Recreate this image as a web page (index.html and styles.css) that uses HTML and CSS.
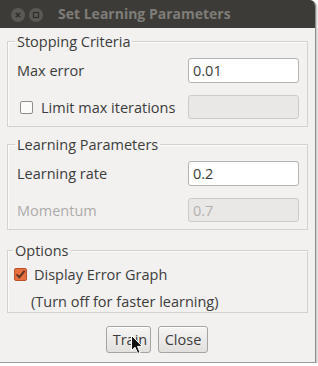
FILE: index.html
```html
<!DOCTYPE html>
<html>
<head>
<meta charset="utf-8">
<title>Set Learning Parameters</title>
<link rel="stylesheet" href="styles.css">
</head>
<body>
<div class="win">
  <div class="titlebar">
    <span class="wbtn">
      <svg width="14" height="14" viewBox="0 0 14 14"><circle cx="7" cy="7" r="7" fill="#5a5955"/><path d="M4.8 4.8 L9.2 9.2 M9.2 4.8 L4.8 9.2" stroke="#2f2e2b" stroke-width="1.4"/></svg>
    </span>
    <span class="wbtn">
      <svg width="14" height="14" viewBox="0 0 14 14"><circle cx="7" cy="7" r="7" fill="#5a5955"/><rect x="4.5" y="4.5" width="5" height="5" fill="none" stroke="#2f2e2b" stroke-width="1.2"/></svg>
    </span>
    <span class="wtitle">Set Learning Parameters</span>
  </div>

  <div class="body">
    <fieldset class="grp">
      <legend>Stopping Criteria</legend>
      <div class="row">
        <span class="lbl">Max error</span>
        <span class="field">0.01</span>
      </div>
      <div class="row row2">
        <span class="lbl check-lbl"><span class="cb"></span>Limit max iterations</span>
        <span class="field off"></span>
      </div>
    </fieldset>

    <fieldset class="grp">
      <legend>Learning Parameters</legend>
      <div class="row">
        <span class="lbl">Learning rate</span>
        <span class="field">0.2</span>
      </div>
      <div class="row row2">
        <span class="lbl dim">Momentum</span>
        <span class="field off">0.7</span>
      </div>
    </fieldset>

    <fieldset class="grp opts">
      <legend>Options</legend>
      <div class="optrow">
        <span class="cb on">
          <svg width="13" height="13" viewBox="0 0 13 13"><path d="M2.6 6.4 L5.3 9.3 L10.6 2.8" fill="none" stroke="#5b3524" stroke-width="2"/></svg>
        </span>
        <span>Display Error Graph</span>
      </div>
      <div class="note">(Turn off for faster learning)</div>
    </fieldset>

    <div class="buttons">
      <span class="btn train">Train</span>
      <span class="btn">Close</span>
      <svg class="cursor" width="13" height="20" viewBox="0 0 13 20"><path d="M0.5 0.5 L0.5 15.5 L4 12.2 L6.6 18.4 L9 17.4 L6.5 11.4 L11.3 11.4 Z" fill="#111" stroke="#fff" stroke-width="1"/></svg>
    </div>
  </div>
</div>
</body>
</html>
```

FILE: styles.css
```css
body {margin: 0; background: #ffffff; font-family: "Open Sans", "DejaVu Sans", sans-serif; font-size: 14.5px; color: #3c3c3c}
.win {width: 315px; height: 362px; background: #f2f1f0; border-right: 1px solid #8e8d8a; border-bottom: 1px solid #9a9996; border-top-right-radius: 6px; box-shadow: 1px 1px 0 #cfcfcf, 2px 2px 0 #e2e2e2; overflow: hidden}
.titlebar {height: 28px; background: #3c3b37; display: flex; align-items: center; padding-left: 11px}
.wbtn {display: flex; width: 14px; height: 14px; margin-right: 4px; margin-top: 2px}
.wtitle {margin-left: 11px; color: #7f7d78; font-weight: bold; font-size: 14px; line-height: 28px}
.body {padding-top: 5px}
.grp {margin: 0 7px 0 7px; padding: 8px 8px 7px 8px; border: 1px solid #d4d2ce; box-shadow: inset 1px 1px 0 #fbfbfa; min-width: 0}
.grp + .grp {margin-top: 9px}
.grp legend {padding: 0 2px; margin-left: -1px; line-height: 17px; color: #3c3c3c}
.row {display: flex; align-items: center; justify-content: space-between; height: 25px}
.row2 {margin-top: 12px; height: 24px}
.lbl {padding-left: 1px}
.check-lbl {display: flex; align-items: center; padding-left: 4px}
.dim {color: #adaba8}
.field {box-sizing: border-box; width: 111px; height: 25px; background: #ffffff; border: 1px solid #b5b3af; border-radius: 3px; padding: 0 4px; line-height: 23px; color: #3c3c3c}
.row2 .field {height: 24px}
.field.off {background: #e9e8e6; border-color: #cdcbc7; color: #b3b1ae}
.cb {box-sizing: border-box; width: 13px; height: 13px; border: 1px solid #8f8d89; border-radius: 2px; background: #fbfbfa; margin-right: 8px; display: inline-flex}
.cb.on {background: #e8703f; border-color: #b9532a; margin-right: 7px}
.cb.on svg {margin: -1px}
.grp.opts {margin-top: 12px; padding-top: 7px; padding-left: 6px; padding-bottom: 2px}
.optrow {display: flex; align-items: center; height: 17px}
.note {padding-left: 17px; margin-top: 10px; line-height: 17px}
.buttons {position: relative; display: flex; justify-content: center; gap: 7px; margin-top: 13px; padding-right: 1px}
.btn {box-sizing: border-box; height: 27px; line-height: 25px; padding: 0 6px; border: 1px solid #a6a4a0; border-radius: 3px; background: linear-gradient(#f6f5f4, #e2e0dd); color: #3c3c3c; box-shadow: inset 0 1px 0 #ffffff}
.train {width: 45px; text-align: center}
.cursor {position: absolute; left: 131px; top: 9px}
```
